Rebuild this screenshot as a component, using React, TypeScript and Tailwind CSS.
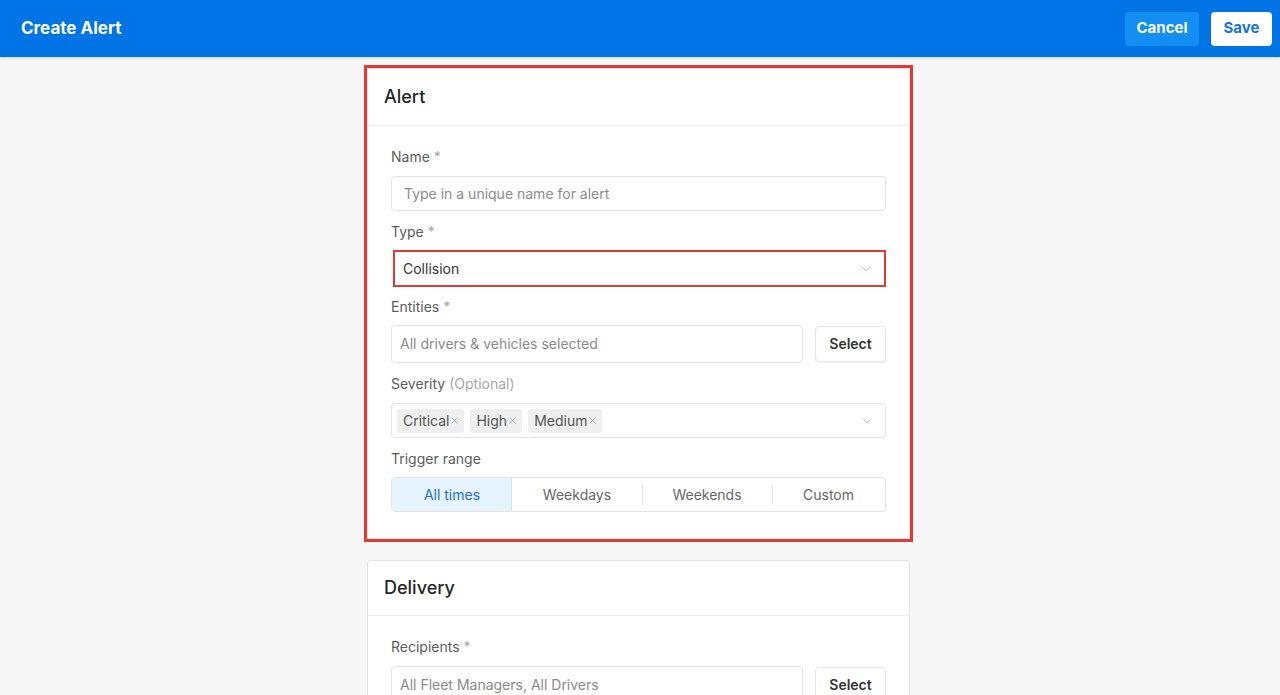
import { ChevronDown, X } from "lucide-react";

const font = { fontFamily: "Inter, 'Noto Sans', sans-serif" };

const Label = ({ text, extra }: { text: string; extra?: string }) => (
  <div className="h-5 text-sm leading-5 text-[#5c5c5c]">
    {text}
    {extra ? <span className="text-[#a6a6a6]"> {extra}</span> : null}
  </div>
);

const SelectButton = () => (
  <button className="ml-3 h-9 w-[71px] shrink-0 rounded border border-[#e6e6e6] bg-white text-sm font-semibold text-[#333] shadow-[0_1px_2px_rgba(0,0,0,0.06)]">
    Select
  </button>
);

const Tag = ({ text }: { text: string }) => (
  <span className="mr-[6px] flex h-6 items-center rounded-[3px] bg-[#efefef] pl-[6px] pr-[4px] text-sm text-[#555]">
    {text}
    <X className="h-[11px] w-[11px] text-[#999]" strokeWidth={1.6} />
  </span>
);

const ranges = [
  { label: "All times", w: "w-[120px]" },
  { label: "Weekdays", w: "w-[130px]" },
  { label: "Weekends", w: "w-[130px]" },
  { label: "Custom", w: "flex-1" },
];

export default function App() {
  return (
    <div className="min-h-[695px] bg-[#f7f7f7]" style={font}>
      <header className="flex h-[57px] items-center justify-between bg-[#0074e4] pl-[21px] pr-2 shadow-[0_1px_3px_rgba(0,0,0,0.15)]">
        <h1 className="text-[17px] font-bold text-white">Create Alert</h1>
        <div className="flex items-center gap-3">
          <button className="h-[34px] w-[74px] rounded bg-[#138ef3] text-[15px] font-bold text-white">
            Cancel
          </button>
          <button className="h-[34px] w-[61px] rounded bg-white text-[15px] font-bold text-[#1a73d9]">
            Save
          </button>
        </div>
      </header>

      <main className="flex justify-center pr-[3px] pt-[11px]">
        <div className="w-[543px]">
          <section className="border border-[#e3e3e3] bg-white outline-[3px] outline-offset-0 outline-[#de3a3a] outline-solid">
            <div className="flex h-[57px] items-center border-b border-[#ececec] px-4">
              <h2 className="text-lg font-medium text-[#262626]">Alert</h2>
            </div>
            <div className="px-[23px] pb-[26px] pt-[21px]">
              <Label text="Name" extra="*" />
              <input
                className="mt-[9px] h-[35px] w-full rounded border border-[#e3e3e3] px-3 text-sm text-[#333] outline-none placeholder:text-[#8c8c8c]"
                placeholder="Type in a unique name for alert"
              />

              <div className="mt-[11px]">
                <Label text="Type" extra="*" />
              </div>
              <div className="ml-[2px] mt-2 flex h-[37px] items-center justify-between border-2 border-[#de3a3a] pl-2 pr-[10px] text-sm text-[#333]">
                <span>Collision</span>
                <ChevronDown className="h-4 w-4 text-[#b3b3b3]" strokeWidth={1.2} />
              </div>

              <div className="mt-[10px]">
                <Label text="Entities" extra="*" />
              </div>
              <div className="mt-2 flex items-center">
                <div className="flex h-[38px] flex-1 items-center rounded border border-[#e3e3e3] px-2 text-sm text-[#8a8a8a]">
                  All drivers &amp; vehicles selected
                </div>
                <SelectButton />
              </div>

              <div className="mt-[11px]">
                <Label text="Severity" extra="(Optional)" />
              </div>
              <div className="mt-[9px] flex h-[35px] items-center justify-between rounded border border-[#e3e3e3] pl-[5px] pr-[10px]">
                <div className="flex items-center">
                  <Tag text="Critical" />
                  <Tag text="High" />
                  <Tag text="Medium" />
                </div>
                <ChevronDown className="h-4 w-4 text-[#b3b3b3]" strokeWidth={1.2} />
              </div>

              <div className="mt-[11px]">
                <Label text="Trigger range" />
              </div>
              <div className="mt-2 flex h-[35px] items-stretch overflow-hidden rounded border border-[#e3e3e3]">
                {ranges.map((r, i) => (
                  <div key={r.label} className={`${r.w} relative flex items-center justify-center text-sm`}>
                    {i === 0 ? (
                      <div className="absolute inset-0 border-r border-[#cfe6fb] bg-[#e6f4ff]" />
                    ) : null}
                    {i > 1 ? <div className="absolute left-0 top-[7px] h-5 w-px bg-[#e3e3e3]" /> : null}
                    <span className={`relative ${i === 0 ? "text-[#1f6fd1]" : "text-[#666]"}`}>{r.label}</span>
                  </div>
                ))}
              </div>
            </div>
          </section>

          <section className="mt-[21px] rounded-[3px] border border-[#e3e3e3] bg-white">
            <div className="flex h-[55px] items-center border-b border-[#ececec] px-4">
              <h2 className="text-lg font-medium text-[#262626]">Delivery</h2>
            </div>
            <div className="px-[23px] pb-6 pt-[21px]">
              <Label text="Recipients" extra="*" />
              <div className="mt-[9px] flex items-center">
                <div className="flex h-[38px] flex-1 items-center rounded border border-[#e3e3e3] px-2 text-sm text-[#8a8a8a]">
                  All Fleet Managers, All Drivers
                </div>
                <SelectButton />
              </div>
            </div>
          </section>
        </div>
      </main>
    </div>
  );
}
